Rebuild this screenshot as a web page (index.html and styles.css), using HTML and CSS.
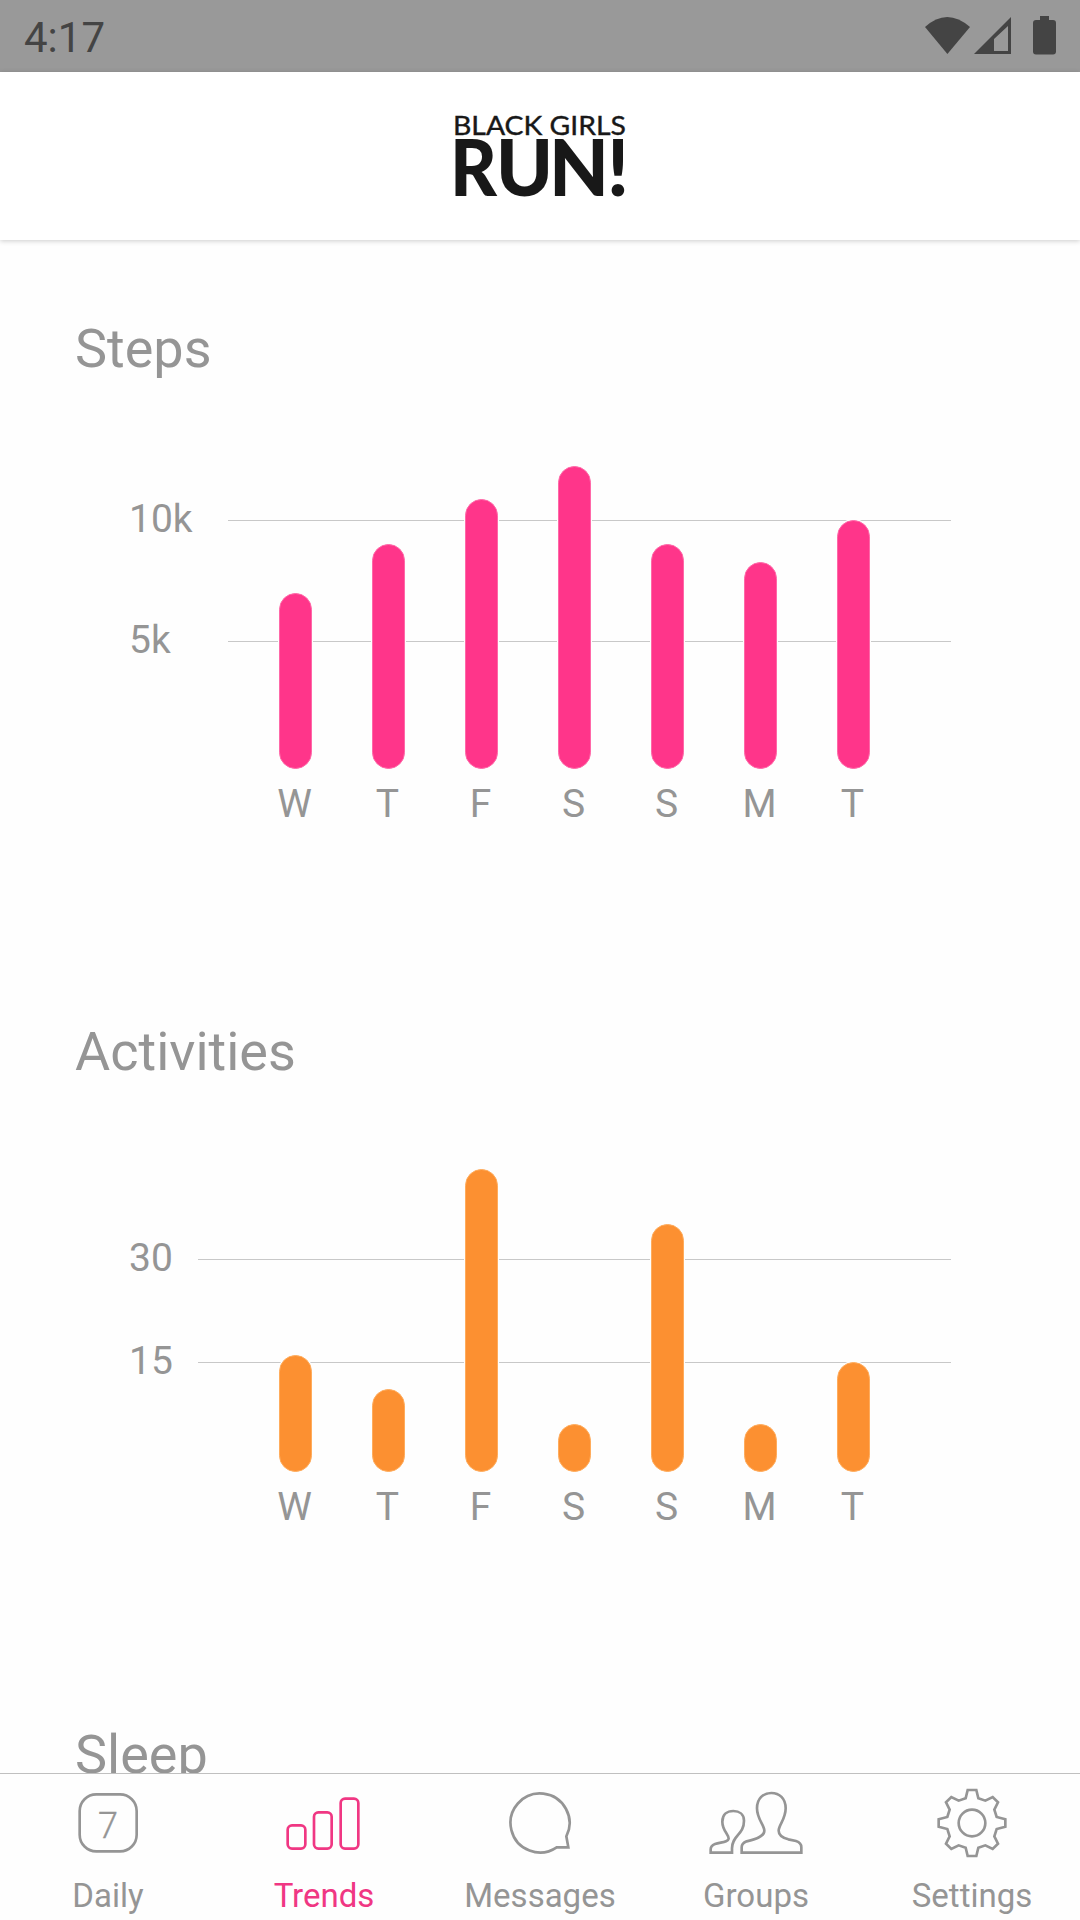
FILE: index.html
```html
<!DOCTYPE html>
<html lang="en">
<head>
    <meta charset="UTF-8">
    <meta name="viewport" content="width=device-width, initial-scale=1.0">
    <title>Trends</title>
    <link rel="stylesheet" href="styles.css">
</head>
<body>
    <div class="status-bar">
        <span class="clock">4:17</span>
        <svg class="status-icons" width="140" height="72" viewBox="0 0 140 72">
            <path d="M5 27 Q27 7 50 27 L27.400 54 Z"/>
            <path fill-rule="evenodd" d="M54 54 L91 17 V54 Z M74 39 V51 H88 V26 Z"/>
            <path d="M120 16 h9 v4 h4 q3 0 3 3 v28.500 q0 3 -3 3 h-17 q-3 0 -3 -3 v-28.500 q0 -3 3 -3 h4 z"/>
        </svg>
    </div>

    <header class="header">
        <svg class="logo" width="172" height="90" viewBox="0 0 172 90">
            <text class="logo-top" x="-1" y="26.500" textLength="173" lengthAdjust="spacingAndGlyphs">BLACK GIRLS</text>
            <text class="logo-main" y="88"><tspan x="-4" textLength="47" lengthAdjust="spacingAndGlyphs">R</tspan><tspan x="42" textLength="57" lengthAdjust="spacingAndGlyphs">U</tspan><tspan x="95" textLength="60" lengthAdjust="spacingAndGlyphs">N</tspan><tspan x="153" textLength="22" lengthAdjust="spacingAndGlyphs">!</tspan></text>
        </svg>
    </header>

    <main class="content">
        <section class="trend steps">
            <h2>Steps</h2>
            <div class="chart">
                <div class="grid-row ten"><span>10k</span><i></i></div>
                <div class="grid-row five"><span>5k</span><i></i></div>
                <div class="bars">
                    <div class="bar" style="height: 176px"></div>
                    <div class="bar" style="height: 225px"></div>
                    <div class="bar" style="height: 270px"></div>
                    <div class="bar" style="height: 303px"></div>
                    <div class="bar" style="height: 225px"></div>
                    <div class="bar" style="height: 207px"></div>
                    <div class="bar" style="height: 249px"></div>
                </div>
            </div>
            <div class="days">
                <span>W</span><span>T</span><span>F</span><span>S</span><span>S</span><span>M</span><span>T</span>
            </div>
        </section>

        <section class="trend activities">
            <h2>Activities</h2>
            <div class="chart">
                <div class="grid-row thirty"><span>30</span><i></i></div>
                <div class="grid-row fifteen"><span>15</span><i></i></div>
                <div class="bars">
                    <div class="bar" style="height: 117px"></div>
                    <div class="bar" style="height: 83px"></div>
                    <div class="bar" style="height: 303px"></div>
                    <div class="bar" style="height: 48px"></div>
                    <div class="bar" style="height: 248px"></div>
                    <div class="bar" style="height: 48px"></div>
                    <div class="bar" style="height: 110px"></div>
                </div>
            </div>
            <div class="days">
                <span>W</span><span>T</span><span>F</span><span>S</span><span>S</span><span>M</span><span>T</span>
            </div>
        </section>

        <section class="trend">
            <h2>Sleep</h2>
        </section>
    </main>

    <nav class="tabs">
        <a class="tab">
            <svg viewBox="0 0 300 240">
                <rect x="65" y="31" width="171" height="171" rx="50"/>
                <text class="day-number" x="150" y="161">7</text>
            </svg>
            <span>Daily</span>
        </a>
        <a class="tab active">
            <svg viewBox="0 0 300 240">
                <rect x="41" y="124" width="53" height="70" rx="13"/>
                <rect x="120" y="85" width="53" height="109" rx="13"/>
                <rect x="200" y="44" width="53" height="150" rx="13"/>
            </svg>
            <span>Trends</span>
        </a>
        <a class="tab">
            <svg viewBox="0 0 300 240">
                <path d="M229 157 A88.500 88.500 0 1 0 200 190 H235 Z"/>
            </svg>
            <span>Messages</span>
        </a>
        <a class="tab">
            <svg viewBox="0 0 300 240">
                <path d="M107 206 H286 V190 Q286 176 270 171 L247 166 Q218 158 218 140 C218 123 239 106 239 73 C239 43 220 27 196 27 C172 27 153 43 153 73 C153 106 175 123 175 140 C175 158 147 166 122 172 Q107 178 107 190 Z"/>
                <path d="M14 206 H78 V193 C78 153 114 153 114 110 C114 91 100 81 82 81 C64 81 49 91 49 113 C49 140 68 150 68 164 C66 174 47 174 27 180 Q14 185 14 196 Z"/>
            </svg>
            <span>Groups</span>
        </a>
        <a class="tab">
            <svg viewBox="0 0 300 240">
                <path d="M137 18 H163 L169 43 L190 50 L212 39 L228 55 L217 77 L224 99 L250 106 V128 L224 135 L217 157 L228 179 L212 195 L190 184 L169 191 L163 216 H137 L131 191 L110 184 L88 195 L72 179 L83 157 L76 135 L50 128 V106 L76 99 L83 77 L72 55 L88 39 L110 50 L131 43 Z"/>
                <circle cx="150" cy="117" r="40"/>
            </svg>
            <span>Settings</span>
        </a>
    </nav>
</body>
</html>
```

FILE: styles.css
```css
* {
    box-sizing: border-box;
}

body {
    font-family: Roboto, sans-serif;
    background-color: #fefefe;
    color: #959595;
    margin: 0;
    height: 1920px;
    display: flex;
    flex-direction: column;
    overflow: hidden;
}

.status-bar {
    flex: none;
    height: 72px;
    background-color: #999;
    color: #444;
    display: flex;
    justify-content: space-between;
    padding-left: 24px;
    padding-right: 20px;
}

.clock {
    font-size: 42px;
    line-height: 76px;
}

.status-icons {
    fill: #444;
}

.header {
    flex: none;
    height: 168px;
    display: flex;
    justify-content: center;
    padding-top: 36px;
    background-color: #fff;
    box-shadow: 0 1px 5px rgba(0, 0, 0, 0.2);
}

.logo {
    fill: #181818;
    font-family: Lato, sans-serif;
    overflow: visible;
}

.logo-top {
    font-size: 27.5px;
    stroke: #181818;
    stroke-width: 0.4;
}

.logo-main {
    font-size: 78px;
    font-weight: 900;
}

.content {
    flex: 1;
    min-height: 0;
    overflow: hidden;
}

.trend {
    height: 703px;
    padding: 77px 129px 0;
}

h2 {
    font-size: 54px;
    font-weight: normal;
    line-height: 64px;
    margin: 0 0 0 -54px;
}

.chart {
    display: grid;
    height: 303px;
    margin-top: 85px;
}

.grid-row, .bars {
    grid-area: 1 / 1;
}

.grid-row {
    display: flex;
    align-items: center;
    height: 46px;
    font-size: 39px;
}

.grid-row span {
    width: 69px;
    padding-bottom: 2px;
}

.grid-row i {
    flex: 1;
    height: 1px;
    margin-left: 30px;
    background-color: #c8c8c8;
}

.activities .grid-row i {
    margin-left: 0;
}

.ten {
    margin-top: 31px;
}

.five {
    margin-top: 152px;
}

.thirty {
    margin-top: 67px;
}

.fifteen {
    margin-top: 170px;
}

.bars {
    display: flex;
    align-items: flex-end;
    gap: 60px;
    padding-left: 150px;
}

.bar {
    width: 33px;
    border: 1px solid #ff68a8;
    border-radius: 17px;
    background-color: #ff358a;
    box-shadow: 0 0 0 1px #fefefe;
}

.activities .bar {
    border-color: #ffac5c;
    background-color: #fc9031;
}

.days {
    display: flex;
    margin: 12px 0 0 119px;
    font-size: 39px;
    line-height: 46px;
}

.days span {
    width: 93px;
    text-align: center;
}

.tabs {
    flex: none;
    height: 147px;
    display: flex;
    border-top: 1px solid #c0c0c0;
    background-color: #fefefe;
}

.tab {
    flex: 1;
    display: flex;
    flex-direction: column;
    align-items: center;
    padding-top: 10px;
    font-size: 33px;
    line-height: 39px;
}

.tab svg {
    width: 100px;
    height: 80px;
    margin-bottom: 12px;
    fill: none;
    stroke: #959595;
    stroke-width: 8;
}

.tab.active {
    color: #f03783;
}

.tab.active svg {
    stroke: #f03783;
}

.tab .day-number {
    font-size: 108px;
    font-weight: 300;
    text-anchor: middle;
    fill: #959595;
    stroke-width: 1;
}
```
